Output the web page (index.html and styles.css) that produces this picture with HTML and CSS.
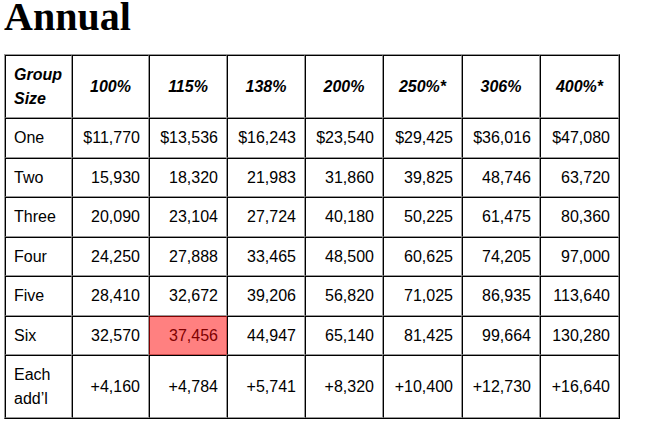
FILE: index.html
```html
<!DOCTYPE html>
<html lang="en">
<head>
<meta charset="utf-8">
<title>Annual</title>
<link rel="stylesheet" href="styles.css">
</head>
<body>
<h1 class="title">Annual</h1>
<table class="fpl">
  <thead>
    <tr>
      <th class="c0 left">Group Size</th>
      <th class="c1">100%</th>
      <th class="c2">115%</th>
      <th class="c3">138%</th>
      <th class="c4">200%</th>
      <th class="c5">250%*</th>
      <th class="c6">306%</th>
      <th class="c7">400%*</th>
    </tr>
  </thead>
  <tbody>
    <tr><td class="left">One</td><td>$11,770</td><td>$13,536</td><td>$16,243</td><td>$23,540</td><td>$29,425</td><td>$36,016</td><td>$47,080</td></tr>
    <tr><td class="left">Two</td><td>15,930</td><td>18,320</td><td>21,983</td><td>31,860</td><td>39,825</td><td>48,746</td><td>63,720</td></tr>
    <tr><td class="left">Three</td><td>20,090</td><td>23,104</td><td>27,724</td><td>40,180</td><td>50,225</td><td>61,475</td><td>80,360</td></tr>
    <tr><td class="left">Four</td><td>24,250</td><td>27,888</td><td>33,465</td><td>48,500</td><td>60,625</td><td>74,205</td><td>97,000</td></tr>
    <tr><td class="left">Five</td><td>28,410</td><td>32,672</td><td>39,206</td><td>56,820</td><td>71,025</td><td>86,935</td><td>113,640</td></tr>
    <tr><td class="left">Six</td><td>32,570</td><td class="hl">37,456</td><td>44,947</td><td>65,140</td><td>81,425</td><td>99,664</td><td>130,280</td></tr>
    <tr><td class="left">Each add’l</td><td>+4,160</td><td>+4,784</td><td>+5,741</td><td>+8,320</td><td>+10,400</td><td>+12,730</td><td>+16,640</td></tr>
  </tbody>
</table>
</body>
</html>
```
FILE: styles.css
```css
html, body {
  background: #fff;
}
body {
  margin: 0;
  padding: 0 4px;
  color: #000;
  font-family: "Liberation Sans", Arial, sans-serif;
  font-size: 16px;
}
.title {
  margin: 0 0 20px;
  font-family: "Liberation Serif", "Times New Roman", serif;
  font-weight: bold;
  font-size: 40px;
  line-height: 34px;
}
.fpl {
  table-layout: fixed;
  width: 616px;
  border-collapse: separate;
  border-spacing: 0;
  border: 1px solid;
  border-color: #999 #000 #000 #999;
}
.fpl th,
.fpl td {
  box-sizing: border-box;
  border: 1px solid;
  border-color: #000 #999 #999 #000;
  padding: 7px 8px;
  line-height: 23.5px;
  vertical-align: middle;
}
.fpl th {
  font-weight: bold;
  font-style: italic;
  text-align: center;
}
.fpl td {
  text-align: right;
  white-space: nowrap;
}
.fpl th.left,
.fpl td.left {
  text-align: left;
  white-space: normal;
}
.c0 { width: 67px; }
.c1 { width: 77px; }
.c2 { width: 78px; }
.c3 { width: 78px; }
.c4 { width: 78px; }
.c5 { width: 79px; }
.c6 { width: 78px; }
.c7 { width: 79px; }
.fpl td.hl {
  background: #ff8080;
  color: #800000;
  border-color: #800000 #cc4c4c #cc4c4c #800000;
}
```
